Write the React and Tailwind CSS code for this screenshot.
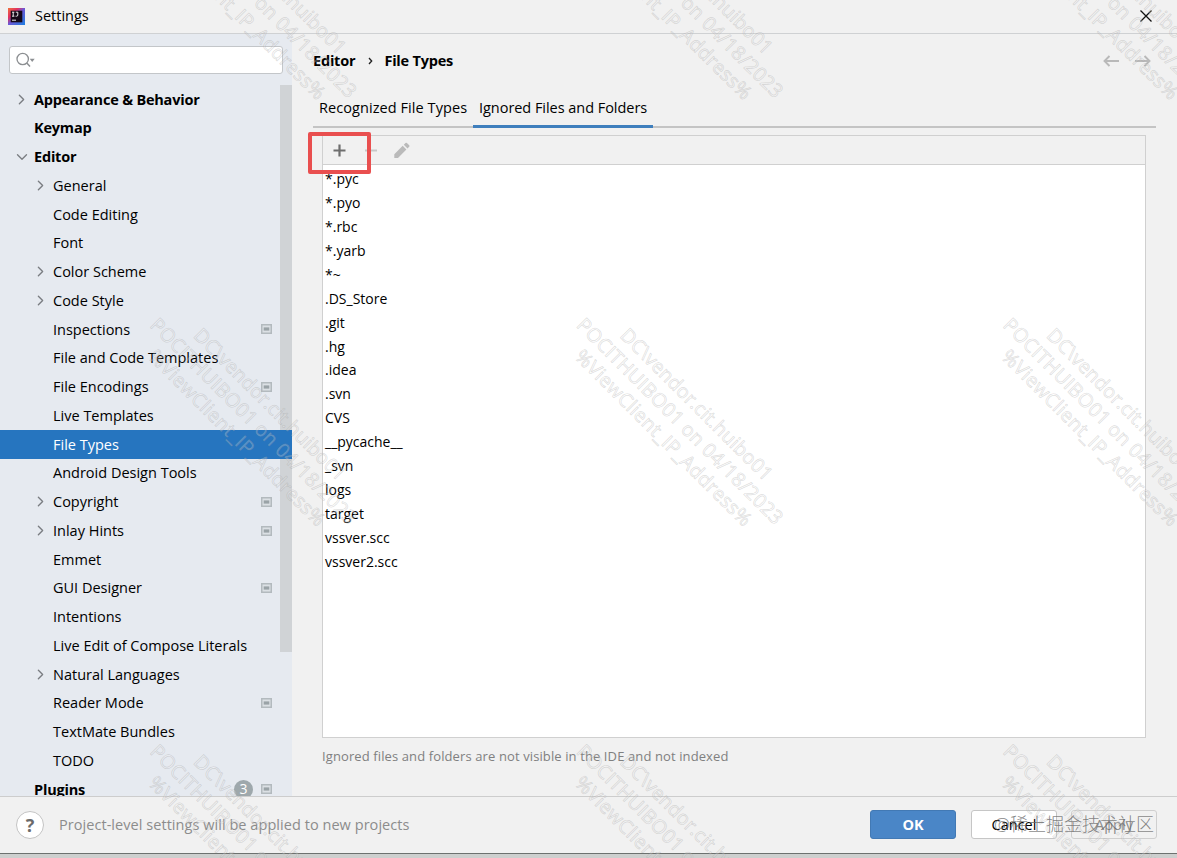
import { ChevronDown, ChevronRight } from 'lucide-react';

const TREE = [
  { label: 'Appearance & Behavior', top: true, arrow: 'right' },
  { label: 'Keymap', top: true },
  { label: 'Editor', top: true, arrow: 'down' },
  { label: 'General', arrow: 'right' },
  { label: 'Code Editing' },
  { label: 'Font' },
  { label: 'Color Scheme', arrow: 'right' },
  { label: 'Code Style', arrow: 'right' },
  { label: 'Inspections', project: true },
  { label: 'File and Code Templates' },
  { label: 'File Encodings', project: true },
  { label: 'Live Templates' },
  { label: 'File Types', selected: true },
  { label: 'Android Design Tools' },
  { label: 'Copyright', arrow: 'right', project: true },
  { label: 'Inlay Hints', arrow: 'right', project: true },
  { label: 'Emmet' },
  { label: 'GUI Designer', project: true },
  { label: 'Intentions' },
  { label: 'Live Edit of Compose Literals' },
  { label: 'Natural Languages', arrow: 'right' },
  { label: 'Reader Mode', project: true },
  { label: 'TextMate Bundles' },
  { label: 'TODO' },
  { label: 'Plugins', top: true, badge: 3, project: true },
];

const IGNORED = [
  '*.pyc', '*.pyo', '*.rbc', '*.yarb', '*~', '.DS_Store', '.git', '.hg', '.idea',
  '.svn', 'CVS', '__pycache__', '_svn', 'logs', 'target', 'vssver.scc', 'vssver2.scc',
];

const STAMPS = [-0.5, 426, 852.5].flatMap(y => [248.8, 675.3, 1101.8].map(x => ({ x, y })));

function Logo() {
  return (
    <svg width="17" height="17" viewBox="0 0 17 17">
      <defs>
        <linearGradient id="logo" x1="0" y1="0" x2="1" y2="1">
          <stop offset="0" stopColor="#f0703c" />
          <stop offset="0.3" stopColor="#e2315f" />
          <stop offset="0.5" stopColor="#6b57d6" />
          <stop offset="1" stopColor="#1b7fe0" />
        </linearGradient>
      </defs>
      <rect width="17" height="17" fill="url(#logo)" />
      <rect x="2.7" y="2.7" width="11.6" height="11.6" fill="#150818" />
      <path d="M4 4.2h2.4M5.2 4.2v4M4 8.2h2.4M7.8 4.2h2v2.8q0 1.2-1.2 1.2H7.600M4 12.2h4" stroke="#fff" strokeWidth="0.9" fill="none" />
    </svg>
  );
}

function ProjectIcon() {
  return (
    <svg className="mr-5 shrink-0" width="11" height="10" viewBox="0 0 11 10">
      <rect x="0.75" y="0.75" width="9.5" height="8.5" fill="#dbe0e4" stroke="#b3babe" strokeWidth="1.5" />
      <rect x="2.7" y="3.4" width="5.6" height="3.2" fill="#9aa3a7" />
    </svg>
  );
}

function TreeRow({ item }) {
  return (
    <div className={`flex h-[28.75px] shrink-0 items-center ${item.selected ? 'bg-[#2675bf] text-white' : 'text-black'} ${item.top ? 'pl-[13px]' : 'pl-8'}`}>
      <span className="flex w-[21px] shrink-0 text-[#7b7e82]">
        {item.arrow === 'right' && <ChevronRight size={17} strokeWidth={1.9} />}
        {item.arrow === 'down' && <ChevronDown size={18} strokeWidth={1.8} />}
      </span>
      <span className={`grow whitespace-nowrap ${item.top ? 'font-bold tracking-[-0.2px]' : ''}`}>{item.label}</span>
      {item.badge && (
        <span className="mr-2 flex size-[19px] items-center justify-center rounded-full bg-[#9ea8ac] text-sm text-white">{item.badge}</span>
      )}
      {item.project && <ProjectIcon />}
    </div>
  );
}

function Toolbar() {
  return (
    <div className="flex h-[29px] shrink-0 items-center border-b border-[#d0d0d0] bg-[#f1f1f1]">
      <svg width="100" height="28" viewBox="0 0 100 28">
        <path d="M10.500 14.5h12M16.5 8.5v12" stroke="#6e6e6e" strokeWidth="2.2" />
        <path d="M42 14.5h12" stroke="#c8c8c8" strokeWidth="2" />
        <path d="M71.300 18.2l8.4-8.4 3.700 3.700-8.4 8.4h-3.700zM80.800 8.700l1.700-1.700q.7-.7 1.400 0l2.300 2.300q.7.7 0 1.400L84.500 12.400z" fill="#bababa" />
      </svg>
    </div>
  );
}

function Watermark() {
  return (
    <svg className="pointer-events-none absolute inset-0" width="1177" height="858">
      {STAMPS.map(({ x, y }) => (
        <g
          key={`${x}-${y}`}
          transform={`translate(${x} ${y}) rotate(45)`}
          textAnchor="middle"
          fontSize="19.5"
          fill="#ffffff"
          fillOpacity="0.22"
          stroke="#909090"
          strokeOpacity="0.3"
          strokeWidth="0.7"
        >
          <text y="-23.5" textLength="206">{'DC\\vendor.cit.huibo01'}</text>
          <text y="0" textLength="282">POCITHUIBO01 on 04/18/2023</text>
          <text y="23.5" textLength="240">%ViewClient_IP_Address%</text>
        </g>
      ))}
    </svg>
  );
}

export default function App() {
  return (
    <div className="relative flex h-[858px] w-[1177px] flex-col overflow-hidden bg-[#f1f1f1] font-['Open_Sans','Noto_Sans_CJK_SC',sans-serif] text-[14.5px] text-black">
      <header className="flex h-[34px] shrink-0 items-center border-b border-[#cfd1d3] pb-px pl-2 pr-[25px]">
        <Logo />
        <span className="ml-[10px] grow">Settings</span>
        <svg className="mb-px" width="12" height="12" viewBox="0 0 12 12">
          <path d="M0.500 0.500l11 11M11.500 0.500l-11 11" stroke="#111" strokeWidth="1.3" />
        </svg>
      </header>

      <div className="flex min-h-0 grow">
        <aside className="flex w-[292px] shrink-0 flex-col overflow-hidden bg-[#e6eaf0]">
          <div className="ml-[9px] mt-3 flex h-7 w-[274px] shrink-0 items-center rounded-[3px] border border-[#c3c6c9] bg-white pl-[6px]">
            <svg width="20" height="16" viewBox="0 0 20 16">
              <circle cx="6.700" cy="7" r="5.700" fill="none" stroke="#8c8f92" strokeWidth="1.3" />
              <path d="M10.800 11.100l3.200 3.400" stroke="#8c8f92" strokeWidth="1.5" />
              <path d="M13.700 6.800h5l-2.500 3.200z" fill="#8c8f92" />
            </svg>
          </div>
          <nav className="relative mt-[11px] flex min-h-0 grow flex-col overflow-hidden">
            <div className="absolute right-0 top-0 h-[567px] w-3 bg-[#d0d3d6]" />
            <div className="relative flex flex-col">
              {TREE.map(item => <TreeRow key={item.label} item={item} />)}
            </div>
          </nav>
        </aside>

        <main className="flex grow flex-col pl-[21px]">
          <div className="mt-[15px] flex h-6 items-center pr-[26px] font-bold tracking-[-0.2px]">
            <span>Editor</span>
            <svg className="ml-[13px] mr-[11px]" width="5" height="8" viewBox="0 0 5 8">
              <path d="M1 1l2.700 3L1 7" fill="none" stroke="#222" strokeWidth="1.3" />
            </svg>
            <span className="grow">File Types</span>
            <svg width="48" height="12" viewBox="0 0 48 12">
              <path d="M16 6H1.500M6.500 1l-5 5 5 5M32 6h14.500M41.500 1l5 5-5 5" fill="none" stroke="#b9b9b9" strokeWidth="1.9" />
            </svg>
          </div>

          <div className="mr-[21px] mt-[15px] flex h-10 shrink-0 border-b-2 border-[#c4c4c4]">
            <div className="flex h-10 w-40 items-center pl-[6px]">
              <span className="whitespace-nowrap tracking-[0.07px]">Recognized File Types</span>
            </div>
            <div className="flex h-10 w-[180px] items-center border-b-[3px] border-[#3f7fbd] pl-[6px] pt-[3px]">
              <span className="whitespace-nowrap tracking-[-0.04px]">Ignored Files and Folders</span>
            </div>
          </div>

          <div className="ml-[9px] mt-[7px] flex h-[603px] w-[824px] shrink-0 flex-col border border-[#d0d0d0] bg-white">
            <Toolbar />
            <ul className="pl-[2px] pt-[1.5px] text-[14px]">
              {IGNORED.map(name => (
                <li key={name} className="flex h-[23.94px] items-center">{name}</li>
              ))}
            </ul>
          </div>
          <p className="ml-[9px] mt-[9px] text-[13px] tracking-[0.11px] text-[#808080]">
            Ignored files and folders are not visible in the IDE and not indexed
          </p>
        </main>
      </div>

      <footer className="flex h-[57px] shrink-0 items-center border-t border-[#cdcdcd] pb-px pl-4">
        <span className="flex size-7 items-center justify-center rounded-full border border-[#c4c4c4] bg-white text-lg font-bold text-[#6b6b6b]">?</span>
        <span className="ml-[15px] grow pt-px tracking-[0.05px] text-[#8c8c8c]">Project-level settings will be applied to new projects</span>
        <button className="mr-[15px] h-[29px] w-[86px] rounded-[3px] border border-[#4279b4] bg-[#4a86c7] pt-px font-bold text-white">OK</button>
        <button className="mr-[14px] h-[29px] w-[86px] rounded-[3px] border border-[#c6c6c6] bg-white pt-px">Cancel</button>
        <button className="mr-5 h-[29px] w-[86px] rounded-[3px] border border-[#cfcfcf] pt-px text-[#8c8c8c]">Apply</button>
      </footer>
      <div className="h-[5px] shrink-0 border-t border-[#6d716f] bg-[#cdcfce]" />

      {/* highlight around the toolbar's add button */}
      <div className="absolute left-[307.500px] top-[131.500px] h-[42px] w-[63px] rounded-[2px] border-4 border-[#e94f4f]" />
      <Watermark />
      <span className="absolute bottom-[22px] right-[23px] whitespace-nowrap text-[18px] font-light leading-6 text-[#666666]/80">@稀土掘金技术社区</span>
    </div>
  );
}
